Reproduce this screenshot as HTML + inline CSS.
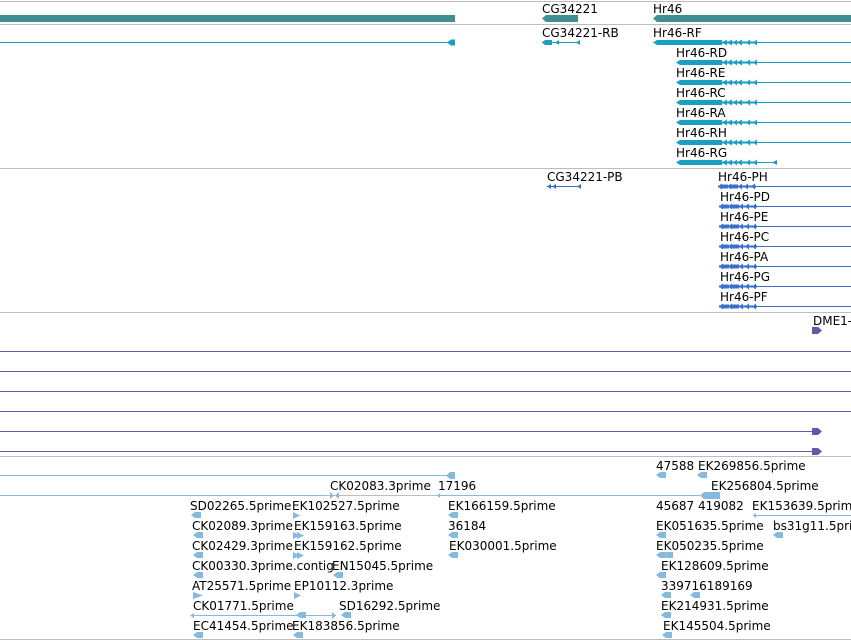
<!DOCTYPE html>
<html><head><meta charset="utf-8"><style>
html,body{margin:0;padding:0;background:#fff;width:851px;height:640px;overflow:hidden}
svg text{font-family:"DejaVu Sans","Liberation Sans",sans-serif;font-size:12px;fill:#000}
</style></head><body>
<svg width="851" height="640" xmlns="http://www.w3.org/2000/svg">
<defs>
<g id="chev" fill="#1a9fc0">
<path d="M0,3 L5,0 L5,6 Z"/><path d="M5,3 L10,0 L10,6 Z"/><path d="M11,3 L15,0 L15,6 Z"/><path d="M15,3 L20,0 L20,6 Z"/><path d="M24,3 L28,0 L28,6 Z"/><path d="M31,3 L35,0 L35,6 Z"/>
<rect x="0" y="2" width="35" height="2"/>
</g>
<g id="pch" fill="#3a70cc">
<path d="M0,3 L4,0 L4,6 Z"/><rect x="2" y="1" width="8" height="4"/><path d="M9,3 L13,0 L13,6 Z"/><rect x="12" y="1" width="8" height="4"/><path d="M20,3 L24,0 L24,6 Z"/><path d="M26,3 L30,0 L30,6 Z"/><path d="M33,3 L37,0 L37,6 Z"/>
<rect x="0" y="2" width="38" height="2"/>
</g>
<path id="lb" d="M0,3 L4,0 L10,0 L10,6 L4,6 Z" fill="#85bade"/>
</defs>
<!-- separators -->
<g stroke="#bdbdbd" stroke-width="1">
<line x1="0" y1="1.5" x2="851" y2="1.5"/><line x1="0" y1="24.5" x2="851" y2="24.5"/>
<line x1="0" y1="168.5" x2="851" y2="168.5"/><line x1="0" y1="312.5" x2="851" y2="312.5"/>
<line x1="0" y1="456.5" x2="851" y2="456.5"/><line x1="0" y1="639.5" x2="851" y2="639.5"/>
</g>
<!-- genes -->
<g fill="#3f8f95">
<rect x="0" y="15" width="455" height="7"/>
<path d="M542,18.5 L546,15 L578,15 L578,22 L546,22 Z"/>
<path d="M653,18.5 L657,15 L851,15 L851,22 L657,22 Z"/>
</g>
<text x="542" y="13">CG34221</text><text x="653" y="13">Hr46</text>
<!-- transcripts -->
<g stroke="#1a9fc0" stroke-width="1">
<line x1="0" y1="42.5" x2="450" y2="42.5"/>
<line x1="722" y1="42.5" x2="851" y2="42.5"/>
<line x1="722" y1="62.5" x2="851" y2="62.5"/>
<line x1="722" y1="82.5" x2="851" y2="82.5"/>
<line x1="722" y1="102.5" x2="851" y2="102.5"/>
<line x1="722" y1="122.5" x2="851" y2="122.5"/>
<line x1="722" y1="142.5" x2="851" y2="142.5"/>
<line x1="722" y1="162.5" x2="776" y2="162.5"/>
<line x1="542" y1="42.5" x2="580" y2="42.5"/>
</g>
<g fill="#1a9fc0">
<path d="M447,42.5 L451,39.5 L455,39.5 L455,45.5 L451,45.5 Z"/>
<path d="M542,42.5 L545,40 L552,40 L552,45 L545,45Z"/><path d="M555,42.5 L559,40 L559,45Z"/><path d="M576,42.5 L580,40 L580,45Z"/>
<path d="M653,42.5 L657,40 L722,40 L722,45 L657,45 Z"/>
<path d="M676,62.5 L680,60 L722,60 L722,65 L680,65 Z"/>
<path d="M676,82.5 L680,80 L722,80 L722,85 L680,85 Z"/>
<path d="M676,102.5 L680,100 L722,100 L722,105 L680,105 Z"/>
<path d="M676,122.5 L680,120 L722,120 L722,125 L680,125 Z"/>
<path d="M676,142.5 L680,140 L722,140 L722,145 L680,145 Z"/>
<path d="M676,162.5 L680,160 L722,160 L722,165 L680,165 Z"/>
<path d="M772,162.5 L777,160 L777,165Z"/>
</g>
<use href="#chev" x="722" y="39.5"/><use href="#chev" x="722" y="59.5"/><use href="#chev" x="722" y="79.5"/>
<use href="#chev" x="722" y="99.5"/><use href="#chev" x="722" y="119.5"/><use href="#chev" x="722" y="139.5"/><use href="#chev" x="722" y="159.5"/>
<text x="542" y="37">CG34221-RB</text><text x="653" y="37">Hr46-RF</text>
<text x="676" y="57">Hr46-RD</text><text x="676" y="77">Hr46-RE</text><text x="676" y="97">Hr46-RC</text>
<text x="676" y="117">Hr46-RA</text><text x="676" y="137">Hr46-RH</text><text x="676" y="157">Hr46-RG</text>
<!-- proteins -->
<g stroke="#3a70cc" stroke-width="1">
<line x1="547" y1="186.5" x2="580" y2="186.5"/>
<line x1="755" y1="186.5" x2="851" y2="186.5"/><line x1="755" y1="206.5" x2="851" y2="206.5"/>
<line x1="755" y1="226.5" x2="851" y2="226.5"/><line x1="755" y1="246.5" x2="851" y2="246.5"/>
<line x1="755" y1="266.5" x2="851" y2="266.5"/><line x1="755" y1="286.5" x2="851" y2="286.5"/>
<line x1="755" y1="306.5" x2="851" y2="306.5"/>
</g>
<g fill="#3a70cc"><path d="M547,186.5 L551,184 L551,189Z"/><path d="M552,186.5 L556,184 L556,189Z"/><path d="M577,186.5 L581,184 L581,189Z"/></g>
<use href="#pch" x="718" y="183.5"/><use href="#pch" x="719" y="203.5"/><use href="#pch" x="719" y="223.5"/>
<use href="#pch" x="719" y="243.5"/><use href="#pch" x="719" y="263.5"/><use href="#pch" x="719" y="283.5"/><use href="#pch" x="719" y="303.5"/>
<text x="547" y="181">CG34221-PB</text><text x="718" y="181">Hr46-PH</text>
<text x="720" y="201">Hr46-PD</text><text x="720" y="221">Hr46-PE</text><text x="720" y="241">Hr46-PC</text>
<text x="720" y="261">Hr46-PA</text><text x="720" y="281">Hr46-PG</text><text x="720" y="301">Hr46-PF</text>
<!-- purple -->
<g stroke="#6a56a6" stroke-width="1">
<line x1="0" y1="351.5" x2="851" y2="351.5"/><line x1="0" y1="371.5" x2="851" y2="371.5"/>
<line x1="0" y1="391.5" x2="851" y2="391.5"/><line x1="0" y1="411.5" x2="851" y2="411.5"/>
<line x1="0" y1="431.5" x2="815" y2="431.5"/><line x1="0" y1="451.5" x2="815" y2="451.5"/>
</g>
<g fill="#6a56a6">
<path d="M812,327 L818,327 L822,330.5 L818,334 L812,334Z"/>
<path d="M812,428 L818,428 L822,431.5 L818,435 L812,435Z"/>
<path d="M812,448 L818,448 L822,451.5 L818,455 L812,455Z"/>
</g>
<text x="813" y="325">DME1-</text>
<!-- ESTs -->
<g stroke="#85bade" stroke-width="1">
<line x1="0" y1="475.5" x2="452" y2="475.5"/>
<line x1="0" y1="495.5" x2="326" y2="495.5"/>
<line x1="437" y1="495.5" x2="700" y2="495.5"/>
<line x1="753" y1="515.5" x2="851" y2="515.5"/>
<line x1="193" y1="615.5" x2="336" y2="615.5"/>
</g>
<line x1="326" y1="495.5" x2="437" y2="495.5" stroke="#bdbdbd"/>
<g fill="#85bade">
<path d="M446,475.5 L450,472 L455,472 L455,479 L450,479Z"/>
<path d="M330,492 L334,495.5 L330,499Z M339,492 L335,495.5 L339,499Z" />
<path d="M437,495.5 L440,493 L440,498Z"/>
<path d="M700,495.5 L704,492 L720,492 L720,499 L704,499Z"/>
<path d="M753,515.5 L756,513 L756,518Z"/>
<path d="M190,615.5 L194,613 L194,618Z"/><path d="M332,612 L336,615.5 L332,619Z"/>
</g>
<g>
<use href="#lb" x="191" y="512"/><use href="#lb" x="193" y="532"/><use href="#lb" x="193" y="552"/><use href="#lb" x="193" y="572"/><use href="#lb" x="193" y="632"/>
<use href="#lb" x="296" y="612" transform="scale(1)"/><use href="#lb" x="341" y="612"/><use href="#lb" x="293" y="632"/><use href="#lb" x="333" y="572"/>
<use href="#lb" x="448" y="512"/><use href="#lb" x="448" y="532"/><use href="#lb" x="448" y="552"/>
<use href="#lb" x="656" y="472"/><use href="#lb" x="697" y="472"/>
<use href="#lb" x="656" y="532"/><use href="#lb" x="656" y="552"/><use href="#lb" x="656" y="572"/><use href="#lb" x="661" y="592"/>
<use href="#lb" x="661" y="612"/><use href="#lb" x="662" y="632"/><use href="#lb" x="663" y="552"/><use href="#lb" x="690" y="592"/><use href="#lb" x="773" y="532"/>
</g>
<g fill="#85bade">
<path d="M193,592 L203,595.5 L193,599Z"/><path d="M294,592 L301,595.5 L294,599Z"/>
<path d="M293,512 L300,515.5 L293,519Z"/><path d="M293,532 L300,535.5 L293,539Z M297,532 L304,535.5 L297,539Z"/>
<path d="M293,552 L300,555.5 L293,559Z M297,552 L304,555.5 L297,559Z"/>
</g>
<text x="330" y="490">CK02083.3prime</text><text x="438" y="490">17196</text>
<text x="656" y="470">47588</text><text x="698" y="470">EK269856.5prime</text>
<text x="711" y="490">EK256804.5prime</text>
<text x="190" y="510">SD02265.5prime</text><text x="292" y="510">EK102527.5prime</text><text x="448" y="510">EK166159.5prime</text>
<text x="656" y="510">45687</text><text x="698" y="510">419082</text><text x="752" y="510">EK153639.5prime</text>
<text x="192" y="530">CK02089.3prime</text><text x="294" y="530">EK159163.5prime</text><text x="448" y="530">36184</text>
<text x="656" y="530">EK051635.5prime</text><text x="773" y="530">bs31g11.5prime</text>
<text x="192" y="550">CK02429.3prime</text><text x="294" y="550">EK159162.5prime</text><text x="449" y="550">EK030001.5prime</text>
<text x="656" y="550">EK050235.5prime</text>
<text x="192" y="570">CK00330.3prime.contig</text><text x="332" y="570">EN15045.5prime</text><text x="661" y="570">EK128609.5prime</text>
<text x="192" y="590">AT25571.5prime</text><text x="294" y="590">EP10112.3prime</text><text x="661" y="590">339716189169</text>
<text x="193" y="610">CK01771.5prime</text><text x="339" y="610">SD16292.5prime</text><text x="661" y="610">EK214931.5prime</text>
<text x="193" y="630">EC41454.5prime</text><text x="292" y="630">EK183856.5prime</text><text x="663" y="630">EK145504.5prime</text>
</svg>
</body></html>
